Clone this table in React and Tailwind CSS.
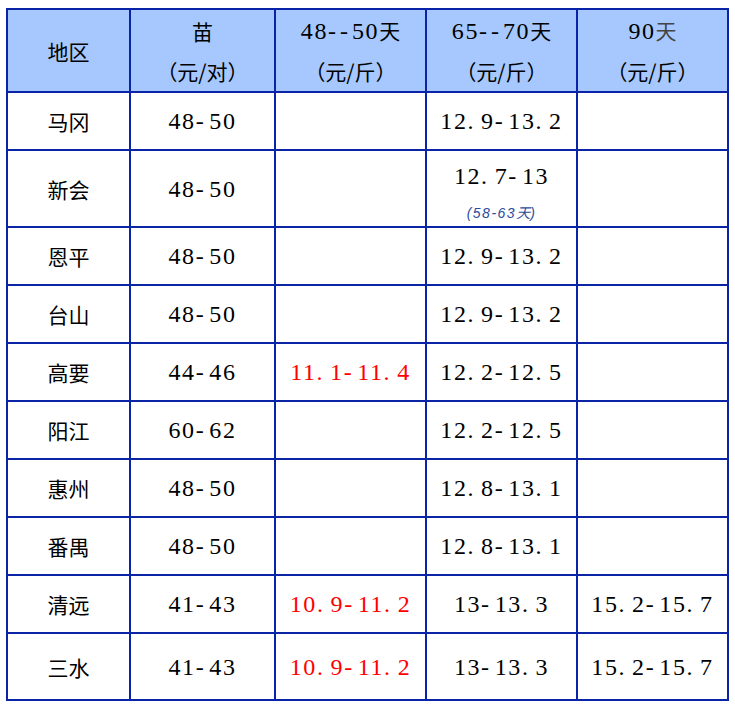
import React from "react";

const rows = [
  { area: "马冈", seed: "48-50", a: "", b: "12.9-13.2", c: "" },
  { area: "新会", seed: "48-50", a: "", b: "12.7-13", c: "", note: true },
  { area: "恩平", seed: "48-50", a: "", b: "12.9-13.2", c: "" },
  { area: "台山", seed: "48-50", a: "", b: "12.9-13.2", c: "" },
  { area: "高要", seed: "44-46", a: "11.1-11.4", b: "12.2-12.5", c: "" },
  { area: "阳江", seed: "60-62", a: "", b: "12.2-12.5", c: "" },
  { area: "惠州", seed: "48-50", a: "", b: "12.8-13.1", c: "" },
  { area: "番禺", seed: "48-50", a: "", b: "12.8-13.1", c: "" },
  { area: "清远", seed: "41-43", a: "10.9-11.2", b: "13-13.3", c: "15.2-15.7" },
  { area: "三水", seed: "41-43", a: "10.9-11.2", b: "13-13.3", c: "15.2-15.7" },
];

const cjk = "font-['Noto_Sans_CJK_SC'] text-[21px] leading-[30px] tracking-normal";
const num = "font-['Liberation_Serif'] text-[24px] leading-[30px] tracking-[1.6px]";

const heights = ["h-[56px]", "h-[75px]", "h-[56px]", "h-[56px]", "h-[56px]", "h-[56px]", "h-[56px]", "h-[56px]", "h-[56px]", "h-[65px]"];

function Num({ value, red }) {
  // the reference font sets dot and dash on wide cells; widen them a bit
  const parts = value.split(/([.-])/);
  return (
    <span className={num + (red ? " text-[#ff0000]" : " text-black")}>
      {parts.map((p, i) =>
        p === "." ? (
          <span key={i} className="tracking-[7.6px]">.</span>
        ) : p === "-" ? (
          <span key={i} className="tracking-[5.6px]">-</span>
        ) : (
          <span key={i}>{p}</span>
        )
      )}
    </span>
  );
}

function HeadCell({ children }) {
  return (
    <div className="bg-[#a6c8fe] flex flex-col items-center justify-center gap-[10px] h-[81px] text-black">
      {children}
    </div>
  );
}

export default function App() {
  return (
    <div className="bg-white w-[735px] h-[712px] pt-[8px] pl-[6px]">
      <div className="grid grid-cols-[121px_143px_149px_149px_149px] gap-[2px] p-[2px] bg-[#0a24a8] w-[723px]">
        <HeadCell>
          <span className={cjk}>地区</span>
        </HeadCell>
        <HeadCell>
          <span className={cjk}>苗</span>
          <span className={cjk}>（元/对）</span>
        </HeadCell>
        <HeadCell>
          <span className={num}>
            48<span className="tracking-[4px]">--</span>50<span className={cjk}>天</span>
          </span>
          <span className={cjk}>（元/斤）</span>
        </HeadCell>
        <HeadCell>
          <span className={num}>
            65<span className="tracking-[4px]">--</span>70<span className={cjk}>天</span>
          </span>
          <span className={cjk}>（元/斤）</span>
        </HeadCell>
        <HeadCell>
          <span className={num}>
            90<span className={cjk + " text-[#444]"}>天</span>
          </span>
          <span className={cjk}>（元/斤）</span>
        </HeadCell>

        {rows.map((r, i) => (
          <React.Fragment key={r.area}>
            <div className={"bg-white flex items-center justify-center text-black " + heights[i]}>
              <span className={cjk}>{r.area}</span>
            </div>
            <div className={"bg-white flex items-center justify-center " + heights[i]}>
              <Num value={r.seed} />
            </div>
            <div className={"bg-white flex items-center justify-center " + heights[i]}>
              {r.a && <Num value={r.a} red />}
            </div>
            {r.note ? (
              <div className={"bg-white flex flex-col items-center pt-[10px] " + heights[i]}>
                <Num value={r.b} />
                <span className="font-['Liberation_Sans'] italic text-[14px] leading-[18px] tracking-[1.5px] text-[#2a4d9c] mt-[12px]">
                  (58-63<span className="font-['Noto_Sans_CJK_SC'] tracking-normal">天</span>)
                </span>
              </div>
            ) : (
              <div className={"bg-white flex items-center justify-center " + heights[i]}>
                <Num value={r.b} />
              </div>
            )}
            <div className={"bg-white flex items-center justify-center " + heights[i]}>
              {r.c && <Num value={r.c} />}
            </div>
          </React.Fragment>
        ))}
      </div>
    </div>
  );
}
